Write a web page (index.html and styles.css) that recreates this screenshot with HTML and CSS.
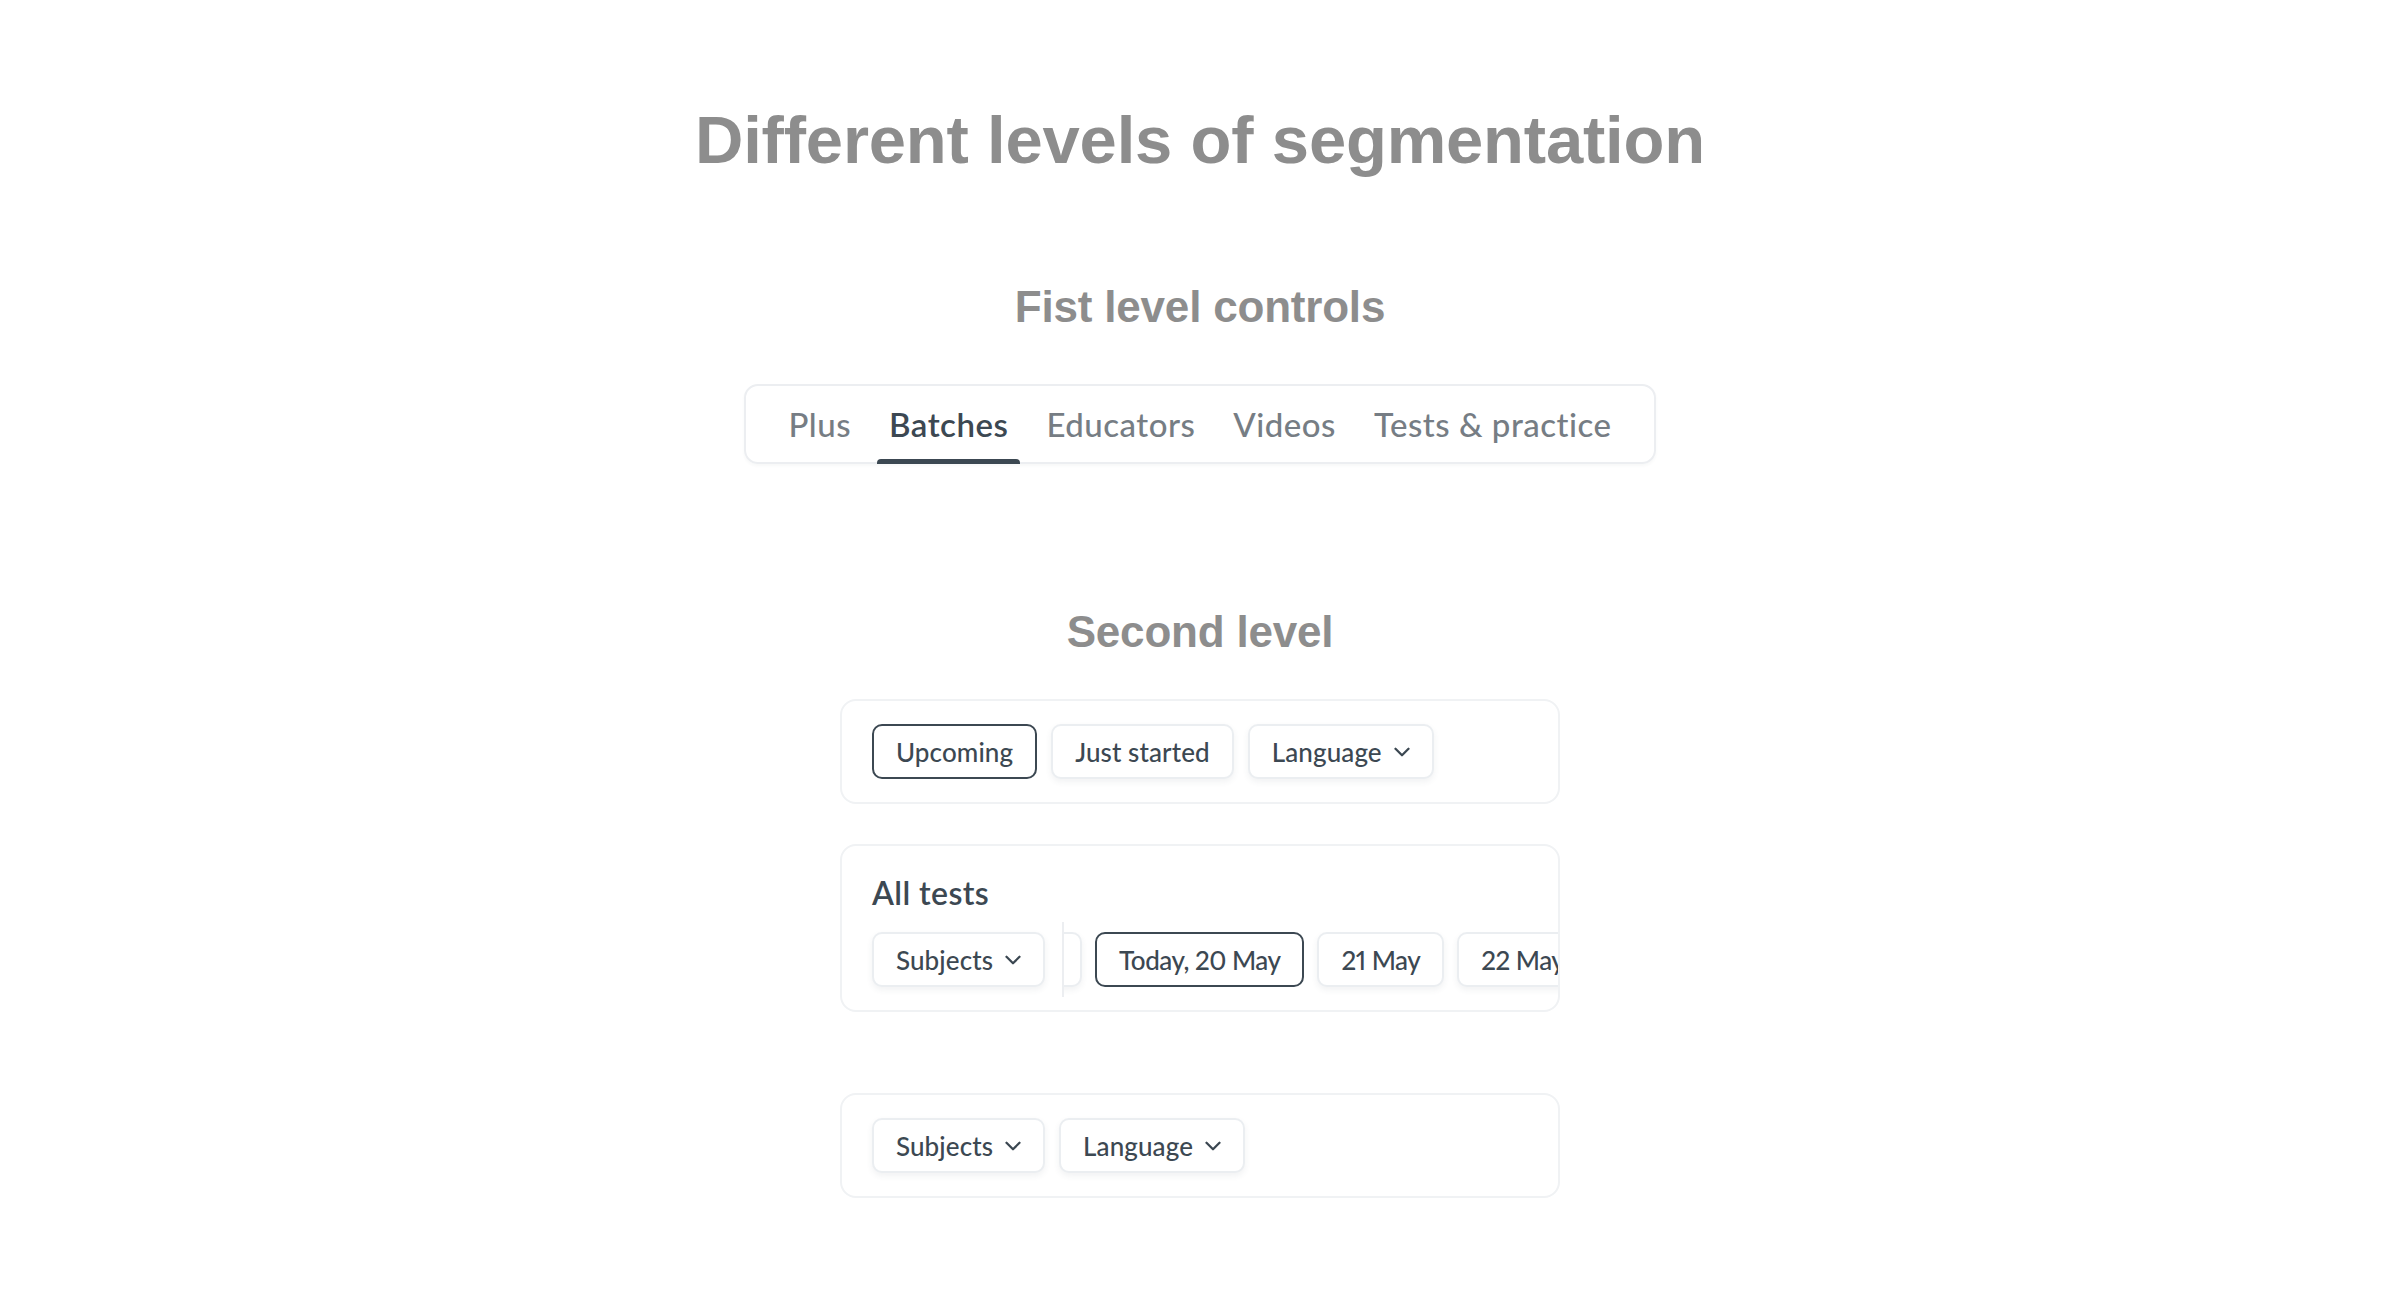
FILE: index.html
```html
<!DOCTYPE html>
<html lang="en">
<head>
<meta charset="utf-8">
<title>Different levels of segmentation</title>
<link rel="stylesheet" href="styles.css">
</head>
<body>
<main class="page">
  <h1 class="title">Different levels of segmentation</h1>

  <h2 class="section-title">Fist level controls</h2>
  <nav class="tabs">
    <span class="tab">Plus</span>
    <span class="tab active">Batches</span>
    <span class="tab">Educators</span>
    <span class="tab">Videos</span>
    <span class="tab">Tests &amp; practice</span>
  </nav>

  <h2 class="section-title second">Second level</h2>
  <div class="cards">
    <section class="card">
      <div class="chip-row">
        <span class="chip selected">Upcoming</span>
        <span class="chip">Just started</span>
        <span class="chip">Language
          <svg class="chevron" viewBox="0 0 16 10" width="16" height="10"><path d="M1.5 1.8 L8 8.2 L14.5 1.8"/></svg>
        </span>
      </div>
    </section>

    <section class="card card-tests">
      <h3 class="card-title">All tests</h3>
      <div class="filter-row">
        <span class="chip">Subjects
          <svg class="chevron" viewBox="0 0 16 10" width="16" height="10"><path d="M1.5 1.8 L8 8.2 L14.5 1.8"/></svg>
        </span>
        <span class="divider"></span>
        <div class="date-scroll">
          <div class="date-track">
            <span class="chip date peek" aria-hidden="true"></span>
            <span class="chip date selected">Today, 20 May</span>
            <span class="chip date">21 May</span>
            <span class="chip date">22 May</span>
            <span class="chip date">23 May</span>
          </div>
        </div>
      </div>
    </section>

    <section class="card detached">
      <div class="chip-row">
        <span class="chip">Subjects
          <svg class="chevron" viewBox="0 0 16 10" width="16" height="10"><path d="M1.5 1.8 L8 8.2 L14.5 1.8"/></svg>
        </span>
        <span class="chip">Language
          <svg class="chevron" viewBox="0 0 16 10" width="16" height="10"><path d="M1.5 1.8 L8 8.2 L14.5 1.8"/></svg>
        </span>
      </div>
    </section>
  </div>
</main>
</body>
</html>
```

FILE: styles.css
```css
html, body {
  margin: 0;
  background: #ffffff;
}

.page {
  display: flex;
  flex-direction: column;
  align-items: center;
  padding-top: 106px;
}

.title {
  margin: 0;
  font-family: "Liberation Sans", Arial, sans-serif;
  font-weight: 700;
  font-size: 67px;
  line-height: 67px;
  letter-spacing: -0.2px;
  color: #8d8d8d;
}

.section-title {
  margin: 112px 0 0;
  font-family: "Liberation Sans", Arial, sans-serif;
  font-weight: 700;
  font-size: 44px;
  line-height: 44px;
  letter-spacing: -0.2px;
  color: #8d8d8d;
}

.section-title.second {
  margin-top: 146px;
}

/* first level tabs */
.tabs {
  margin-top: 55px;
  display: flex;
  gap: 14px;
  height: 76px;
  padding: 0 30px;
  border: 2px solid #eceef1;
  border-radius: 14px;
  box-shadow: 0 2px 3px rgba(60, 72, 82, 0.04);
}

.tab {
  position: relative;
  display: flex;
  align-items: center;
  padding: 0 12px;
  font-family: Lato, "Open Sans", sans-serif;
  font-weight: 500;
  font-size: 33px;
  letter-spacing: 0.5px;
  color: #767d84;
}

.tab.active {
  color: #3c4852;
  font-weight: 600;
}

.tab.active::after {
  content: "";
  position: absolute;
  left: 0;
  right: 0;
  bottom: -2px;
  height: 5px;
  border-radius: 4px 4px 0 0;
  background: #3c4852;
}

/* second level cards */
.cards {
  margin-top: 45px;
  width: 720px;
  display: flex;
  flex-direction: column;
  gap: 40px;
}

.card {
  box-sizing: border-box;
  border: 2px solid #f0f2f4;
  border-radius: 16px;
  padding: 23px 30px 23px;
  overflow: hidden;
  background: #ffffff;
}

.card.detached {
  margin-top: 41px;
}

.card-tests {
  padding: 28px 0 23px 30px;
}

.card-title {
  margin: 0;
  font-family: Lato, "Open Sans", sans-serif;
  font-weight: 600;
  font-size: 32px;
  line-height: 1.2;
  letter-spacing: 0.4px;
  color: #3c4852;
}

.chip-row {
  display: flex;
  gap: 14px;
}

.filter-row {
  margin-top: 20px;
  display: flex;
  align-items: center;
}

.divider {
  flex: none;
  width: 2px;
  height: 75px;
  margin: -10px 0 -10px 17px;
  background: #eceef1;
}

.date-scroll {
  flex: 1;
  min-width: 0;
  overflow: hidden;
  padding-bottom: 8px;
  margin-bottom: -8px;
}

.date-track {
  display: flex;
  gap: 13px;
}

.chip {
  flex: none;
  box-sizing: border-box;
  display: inline-flex;
  align-items: center;
  gap: 12px;
  height: 55px;
  padding: 0 22px;
  border: 2px solid #ebeef1;
  border-radius: 10px;
  background: #ffffff;
  box-shadow: 0 3px 6px rgba(60, 72, 82, 0.07);
  font-family: Lato, "Open Sans", sans-serif;
  font-weight: 500;
  font-size: 26px;
  letter-spacing: 0.1px;
  color: #3c4852;
  white-space: nowrap;
}

.chip.date {
  font-variant-numeric: proportional-nums;
  letter-spacing: -0.5px;
}

.chip.peek {
  width: 124px;
  margin-left: -106px;
}

.chip.selected {
  border-color: #3c4852;
  box-shadow: none;
}

.chevron {
  display: block;
  fill: none;
  stroke: #3c4852;
  stroke-width: 2.3;
  stroke-linecap: round;
  stroke-linejoin: round;
}
```
